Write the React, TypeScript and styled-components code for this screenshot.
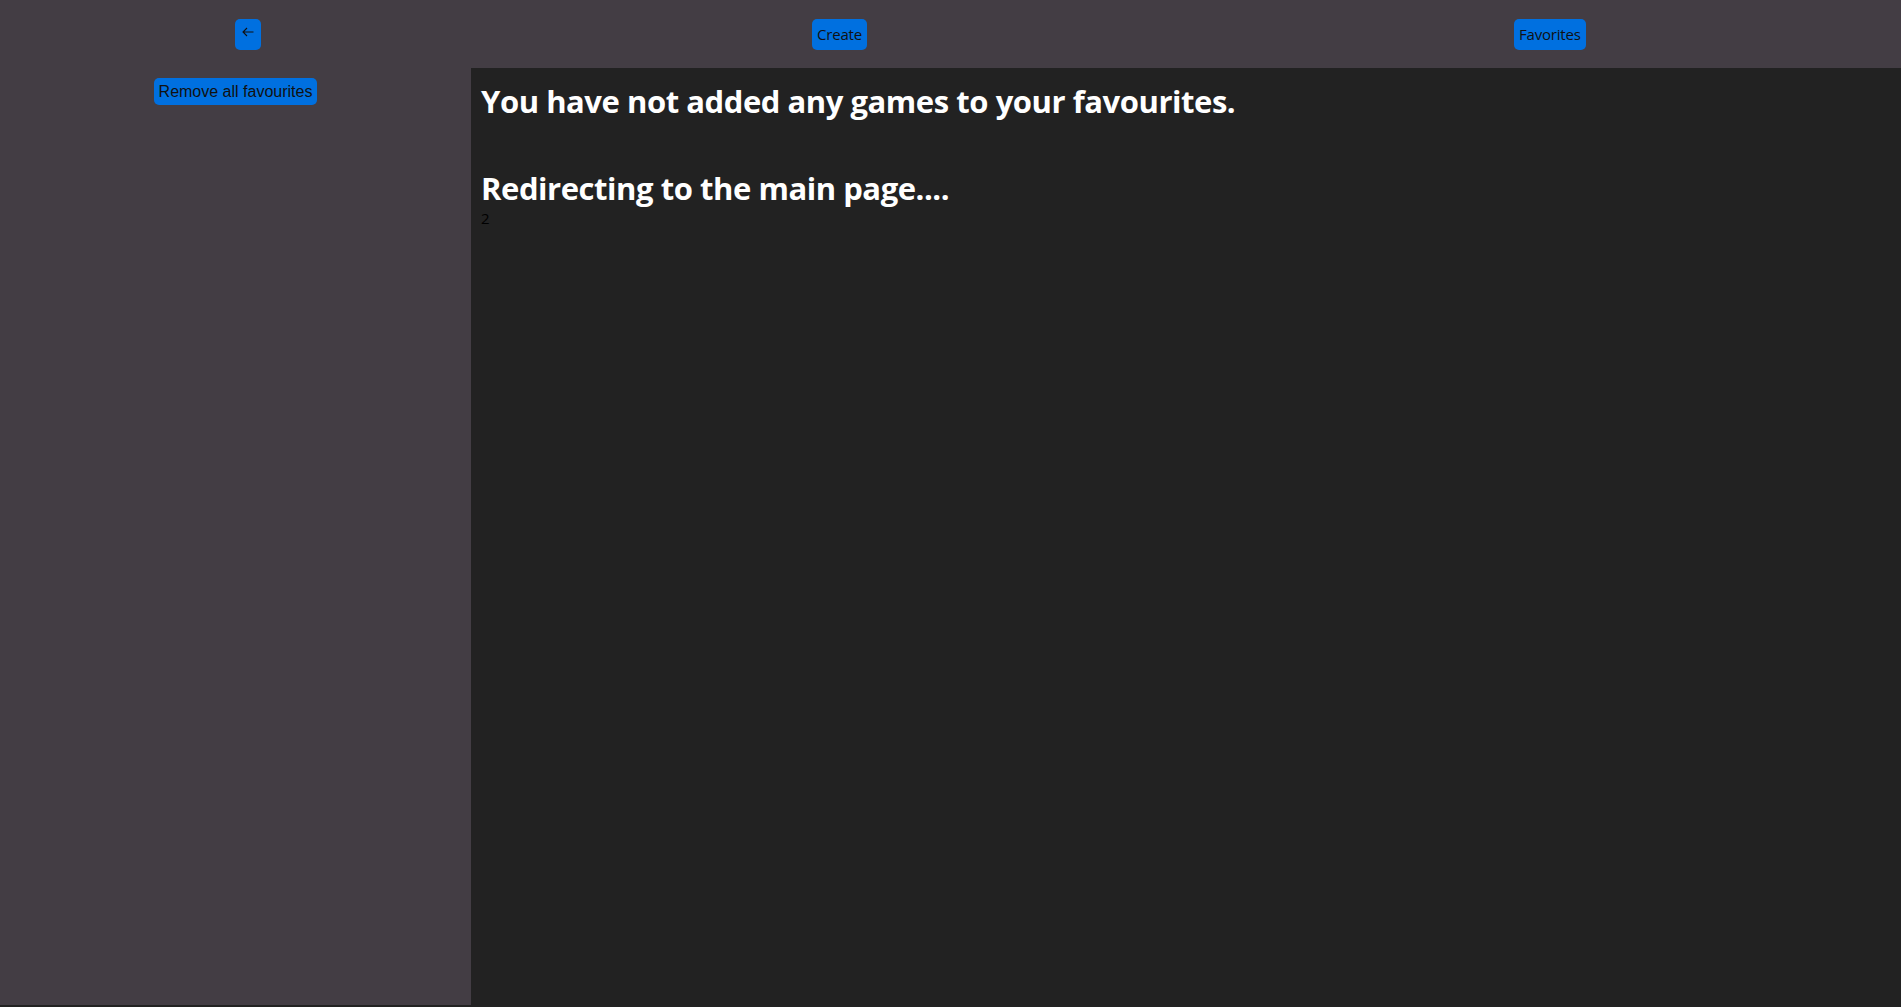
import React from "react";
import styled, { createGlobalStyle } from "styled-components";

const GlobalStyle = createGlobalStyle`
  html, body {
    margin: 0;
    padding: 0;
    background: #222222;
  }
  body {
    font-family: "Open Sans", "Noto Sans", sans-serif;
    overflow: hidden;
  }
`;

const Page = styled.div`
  display: flex;
  flex-direction: column;
  width: 1901px;
  min-height: 1007px;
`;

const Header = styled.header`
  height: 68px;
  background: #433d44;
  display: grid;
  grid-template-columns: 235px 577px 702px 1fr;
  align-items: center;
`;

const Slot = styled.div<{ $col: number }>`
  grid-column: ${(p) => p.$col};
  display: flex;
`;

const BlueButton = styled.button`
  background: #0070e0;
  color: #111;
  border: none;
  border-radius: 5px;
  cursor: pointer;
`;

const NavButton = styled(BlueButton)`
  height: 31px;
  padding: 0 5px;
  font-family: "Open Sans", "Noto Sans", sans-serif;
  font-size: 15px;
  letter-spacing: -0.2px;
`;

const BackButton = styled(BlueButton)`
  width: 26px;
  height: 31px;
  padding: 0 0 4px;
  display: flex;
  align-items: center;
  justify-content: center;
`;

const Body = styled.div`
  display: flex;
  flex: 1;
`;

const Sidebar = styled.aside`
  width: 471px;
  min-height: 937px;
  background: #433d44;
  display: flex;
  flex-direction: column;
  align-items: center;
  padding-top: 10px;
  box-sizing: border-box;
  align-self: flex-start;
`;

const RemoveButton = styled(BlueButton)`
  height: 27px;
  padding: 0 5px;
  font-family: "Liberation Sans", Arial, sans-serif;
  font-size: 16px;
`;

const Main = styled.main`
  flex: 1;
  background: #222222;
  padding: 0 10px;
`;

const Heading = styled.h1`
  color: #ffffff;
  font-family: "Open Sans", "Noto Sans", sans-serif;
  font-weight: 700;
  font-size: 31px;
  letter-spacing: -0.45px;
  margin: 13px 0 0;
  line-height: 1.3;
  & + & {
    margin-top: 47px;
  }
`;

const Countdown = styled.div`
  color: #000;
  font-family: "Open Sans", "Noto Sans", sans-serif;
  font-size: 15px;
  line-height: 18px;
`;

export default function App() {
  return (
    <>
      <GlobalStyle />
      <Page>
        <Header>
          <Slot $col={2}>
            <BackButton aria-label="Back">
              <svg width="12" height="10" viewBox="0 0 12 10" fill="none">
                <path d="M11.5 5H1M5 1L1 5l4 4" stroke="#111" strokeWidth="1.1" />
              </svg>
            </BackButton>
          </Slot>
          <Slot $col={3}>
            <NavButton>Create</NavButton>
          </Slot>
          <Slot $col={4}>
            <NavButton>Favorites</NavButton>
          </Slot>
        </Header>
        <Body>
          <Sidebar>
            <RemoveButton>Remove all favourites</RemoveButton>
          </Sidebar>
          <Main>
            <Heading>You have not added any games to your favourites.</Heading>
            <Heading>Redirecting to the main page....</Heading>
            <Countdown>2</Countdown>
          </Main>
        </Body>
      </Page>
    </>
  );
}
